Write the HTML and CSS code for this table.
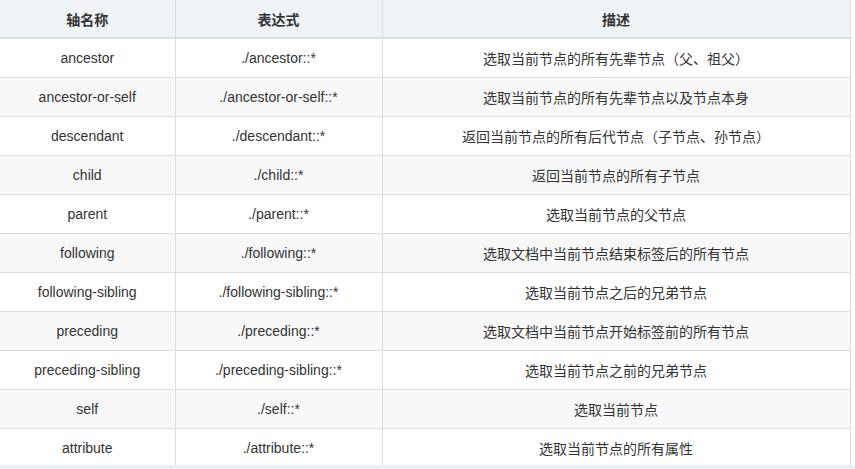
FILE: index.html
```html
<!DOCTYPE html>
<html lang="zh">
<head>
<meta charset="utf-8">
<link rel="stylesheet" href="styles.css">
</head>
<body>
<div class="page">
<table class="axes">
<colgroup><col class="c1"><col class="c2"><col class="c3"></colgroup>
<thead>
<tr><th>轴名称</th><th>表达式</th><th>描述</th></tr>
</thead>
<tbody>
<tr><td>ancestor</td><td>./ancestor::*</td><td>选取当前节点的所有先辈节点（父、祖父）</td></tr>
<tr><td>ancestor-or-self</td><td>./ancestor-or-self::*</td><td>选取当前节点的所有先辈节点以及节点本身</td></tr>
<tr><td>descendant</td><td>./descendant::*</td><td>返回当前节点的所有后代节点（子节点、孙节点）</td></tr>
<tr><td>child</td><td>./child::*</td><td>返回当前节点的所有子节点</td></tr>
<tr><td>parent</td><td>./parent::*</td><td>选取当前节点的父节点</td></tr>
<tr><td>following</td><td>./following::*</td><td>选取文档中当前节点结束标签后的所有节点</td></tr>
<tr><td>following-sibling</td><td>./following-sibling::*</td><td>选取当前节点之后的兄弟节点</td></tr>
<tr><td>preceding</td><td>./preceding::*</td><td>选取文档中当前节点开始标签前的所有节点</td></tr>
<tr><td>preceding-sibling</td><td>./preceding-sibling::*</td><td>选取当前节点之前的兄弟节点</td></tr>
<tr><td>self</td><td>./self::*</td><td>选取当前节点</td></tr>
<tr><td>attribute</td><td>./attribute::*</td><td>选取当前节点的所有属性</td></tr>
</tbody>
</table>
</div>
</body>
</html>
```
FILE: styles.css
```css
html, body {
  margin: 0;
  padding: 0;
  background: #e8eef3;
}
.page {
  width: 855px;
  height: 465px;
  background: #ffffff;
  overflow: hidden;
}
.axes {
  border-collapse: collapse;
  width: 850px;
  table-layout: fixed;
  font-family: Arial, "Liberation Sans", "Noto Sans CJK SC", sans-serif;
  font-size: 14px;
  color: #333333;
  border-right: 1px solid #dddddd;
}
.c1 { width: 175px; }
.c2 { width: 207px; }
.c3 { width: 468px; }
.axes th {
  background: #eff3f6;
  font-weight: bold;
  height: 37px;
  padding: 0;
  text-align: center;
  border-left: 1px solid #dddddd;
  border-bottom: 2px solid #dddddd;
}
.axes td {
  height: 38px;
  padding: 0;
  text-align: center;
  border-left: 1px solid #dddddd;
  border-bottom: 1px solid #dddddd;
}
.axes th:first-child, .axes td:first-child {
  border-left: none;
}
.axes tbody tr:nth-child(even) td {
  background: #f8f8f8;
}
```
